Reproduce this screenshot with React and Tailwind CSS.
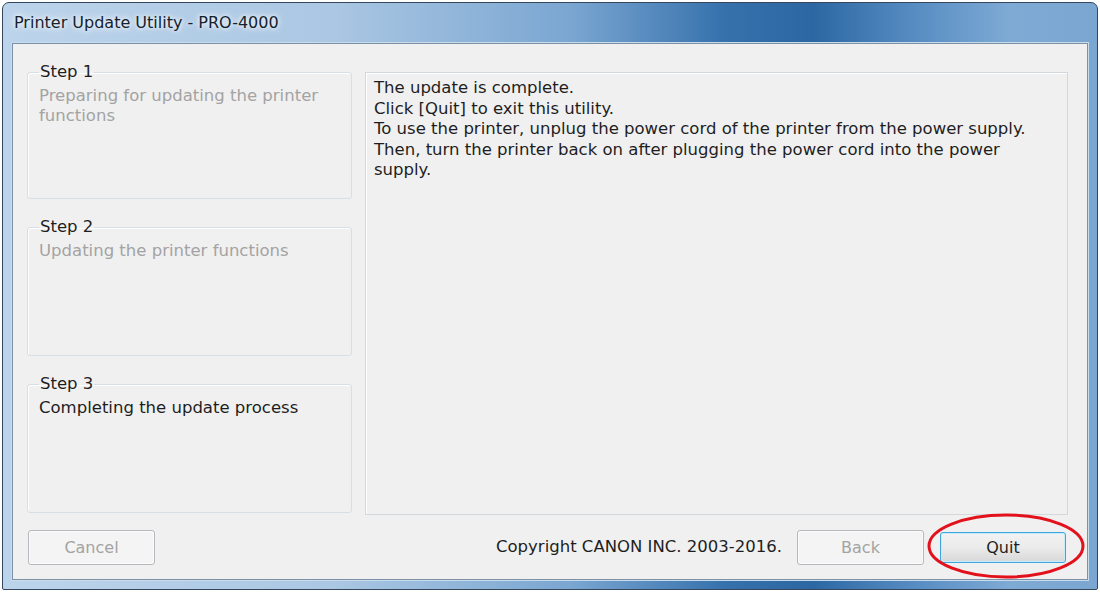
import React from "react";

const ui = { fontFamily: '"DejaVu Sans", Verdana, sans-serif' };

function StepGroup({ label, text, active = false, className = "" }) {
  return (
    <fieldset
      className={`rounded-[3px] border border-[#d5dfe5] shadow-[inset_1px_1px_0_#ffffff] px-[11px] ${className}`}
    >
      <legend className="px-[1px] text-[16.5px] leading-[20px] text-[#1e1e1e]">
        {label}
      </legend>
      <div
        className={`mt-[4px] text-[16.5px] leading-[20px] ${
          active ? "text-[#1e1e1e]" : "text-[#a3a3a3]"
        }`}
      >
        {text}
      </div>
    </fieldset>
  );
}

function Button({ children, disabled = false, focused = false }) {
  if (focused) {
    return (
      <button className="w-[126px] h-[31px] rounded-[3px] border border-[#3ea6dd] shadow-[inset_0_0_0_1px_#c6ecfb] bg-gradient-to-b from-[#f2f2f2] via-[#ebebeb] to-[#d8d8d8] text-[16px] text-[#1e1e1e]">
        {children}
      </button>
    );
  }
  return (
    <button
      disabled={disabled}
      className="w-[127px] h-[35px] rounded-[3px] border border-[#b5b9bd] shadow-[inset_0_0_0_1px_#fbfbfb] bg-[#f4f4f4] text-[16px] text-[#a3a3a3]"
    >
      {children}
    </button>
  );
}

export default function App() {
  return (
    <div className="w-[1100px] h-[592px] bg-white p-[2px]" style={ui}>
      <div className="h-full flex flex-col rounded-t-[7px] rounded-b-[2px] border border-[#34475d] bg-[linear-gradient(to_right,#bcd4eb_0%,#abc7e3_30%,#7aa6d1_52%,#3671ac_66%,#2c67a3_74%,#5a8fc4_84%,#7eaad4_92%,#7aa6d1_100%)] px-[9px] pb-[9px]">
        {/* title bar */}
        <div className="h-[40px] flex items-center pl-[2px]">
          <span className="text-[16px] text-[#14222f] [text-shadow:0_0_8px_#ffffff,0_0_4px_#ffffff]">
            Printer Update Utility - PRO-4000
          </span>
        </div>

        {/* client area */}
        <div className="flex-1 flex flex-col bg-[#f0f0f0] border border-[#7d91a6] shadow-[0_0_0_1px_#c9dcec]">
          <div className="flex gap-[13px] pt-[18px] pl-[14px] pr-[19px]">
            <div className="w-[325px] flex flex-col gap-[18px]">
              <StepGroup
                label="Step 1"
                text={
                  <>
                    Preparing for updating the printer
                    <br />
                    functions
                  </>
                }
                className="h-[137px]"
              />
              <StepGroup
                label="Step 2"
                text="Updating the printer functions"
                className="h-[139px]"
              />
              <StepGroup
                label="Step 3"
                text="Completing the update process"
                active
                className="h-[139px]"
              />
            </div>

            <div className="flex-1 mt-[10px] h-[443px] border border-[#d3d8dd] shadow-[inset_1px_1px_0_#ffffff] px-[8px] pt-[5px] text-[16.5px] leading-[20.6px] text-[#1e1e1e]">
              <p>The update is complete.</p>
              <p>Click [Quit] to exit this utility.</p>
              <p>
                To use the printer, unplug the power cord of the printer from
                the power supply.
              </p>
              <p>
                Then, turn the printer back on after plugging the power cord
                into the power
                <br />
                supply.
              </p>
            </div>
          </div>

          {/* button row */}
          <div className="mt-auto flex items-center pl-[15px] pr-[21px] pb-[14px]">
            <Button disabled>Cancel</Button>
            <span className="ml-auto text-[16.5px] text-[#1e1e1e]">
              Copyright CANON INC. 2003-2016.
            </span>
            <div className="ml-[15px]">
              <Button disabled>Back</Button>
            </div>
            <div className="relative ml-[16px]">
              <Button focused>Quit</Button>
              <svg
                className="absolute left-[-13px] top-[-19px] pointer-events-none"
                width="160"
                height="68"
                viewBox="0 0 160 68"
              >
                <ellipse
                  cx="79"
                  cy="33"
                  rx="77"
                  ry="31"
                  fill="none"
                  stroke="#e3111b"
                  strokeWidth="3"
                />
              </svg>
            </div>
          </div>
        </div>
      </div>
    </div>
  );
}
